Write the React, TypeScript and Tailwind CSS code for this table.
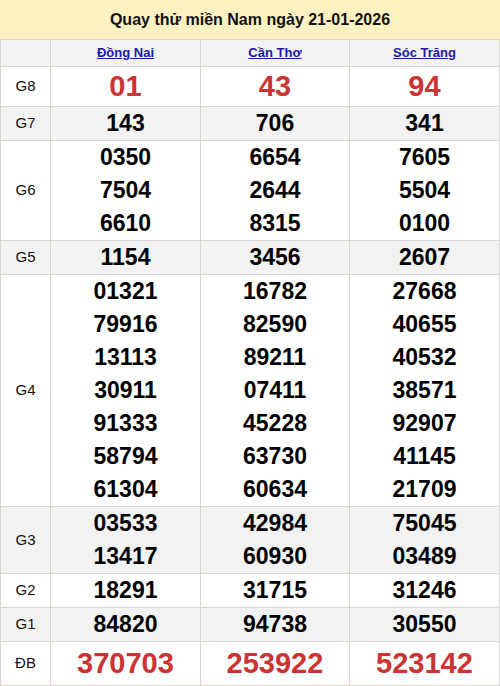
const provinces = ['Đồng Nai', 'Cần Thơ', 'Sóc Trăng'];

type Row = { label: string; values: string[][]; kind?: 'big' | 'normal'; h?: string; gray?: boolean };

const rows: Row[] = [
  { label: 'G8', values: [['01'], ['43'], ['94']], kind: 'big', h: 'h-[39px]' },
  { label: 'G7', values: [['143'], ['706'], ['341']], gray: true },
  { label: 'G6', values: [['0350', '7504', '6610'], ['6654', '2644', '8315'], ['7605', '5504', '0100']] },
  { label: 'G5', values: [['1154'], ['3456'], ['2607']], gray: true },
  {
    label: 'G4',
    values: [
      ['01321', '79916', '13113', '30911', '91333', '58794', '61304'],
      ['16782', '82590', '89211', '07411', '45228', '63730', '60634'],
      ['27668', '40655', '40532', '38571', '92907', '41145', '21709'],
    ],
  },
  { label: 'G3', values: [['03533', '13417'], ['42984', '60930'], ['75045', '03489']], gray: true },
  { label: 'G2', values: [['18291'], ['31715'], ['31246']] },
  { label: 'G1', values: [['84820'], ['94738'], ['30550']], gray: true },
  { label: 'ĐB', values: [['370703'], ['253922'], ['523142']], kind: 'big', h: 'h-[43px]' },
];

const cols = ['w-[150px]', 'w-[149px]', 'w-[151px] border-r'];

export default function App() {
  return (
    <div className="w-[500px] bg-white font-['Liberation_Sans',Arial,sans-serif] text-black">
      <div className="h-[39px] bg-[#fff1c1] flex items-center justify-center text-[16px] font-bold text-[#111]">
        Quay thử miền Nam ngày 21-01-2026
      </div>
      <div className="border-t border-[#dcd5cc]">
        <div className="flex h-[27px] border-b border-[#dcd5cc] bg-[#f2f2f2]">
          <div className="w-[50px] border-l border-[#dcd5cc]" />
          {provinces.map((p, i) => (
            <div key={p} className={`${cols[i]} border-l border-[#dcd5cc] flex items-center justify-center`}>
              <a href="#" className="text-[13px] font-bold text-[#1a1aa6] underline">
                {p}
              </a>
            </div>
          ))}
        </div>
        {rows.map((r) => (
          <div key={r.label} className={`flex border-b border-[#dcd5cc] ${r.gray ? 'bg-[#f2f2f2]' : 'bg-white'}`}>
            <div className="w-[50px] border-l border-[#dcd5cc] flex items-center justify-center text-[15px] text-[#111]">
              {r.label}
            </div>
            {r.values.map((vals, i) => (
              <div key={i} className={`${cols[i]} border-l border-[#dcd5cc] flex flex-col items-center justify-center`}>
                {r.kind === 'big' ? (
                  <div className={`${r.h} flex items-center text-[29px] font-bold text-[#cc3333]`}>{vals[0]}</div>
                ) : (
                  vals.map((v, j) => (
                    <div key={j} className="h-[33px] leading-[33px] text-[23px] font-bold">
                      {v}
                    </div>
                  ))
                )}
              </div>
            ))}
          </div>
        ))}
      </div>
    </div>
  );
}
